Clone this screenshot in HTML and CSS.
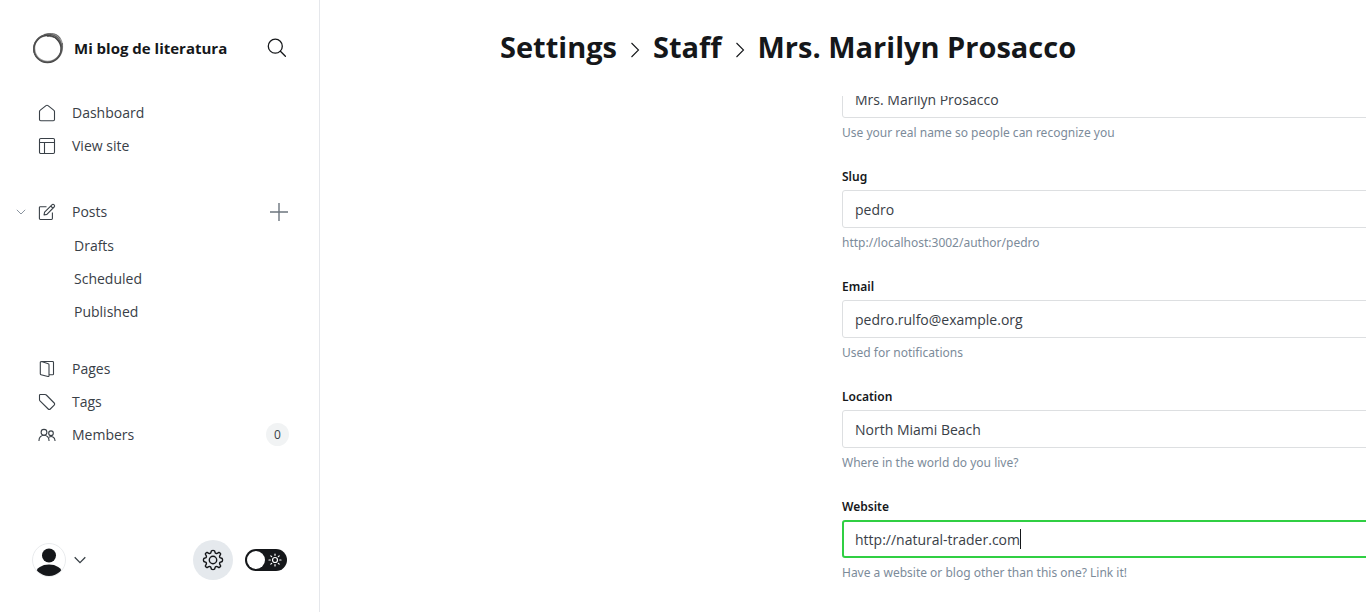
FILE: index.html
```html
<!DOCTYPE html>
<html lang="en">
<head>
<meta charset="utf-8">
<meta name="viewport" content="width=device-width, initial-scale=1">
<title>Settings - Staff - Mrs. Marilyn Prosacco</title>
<link rel="stylesheet" href="styles.css">
</head>
<body>
<div class="app">
  <aside class="sidebar">
    <header class="brand">
      <svg class="brand-logo" viewBox="0 0 32 32" fill="none" aria-hidden="true">
        <path fill-rule="evenodd" d="M8 4.500C14 1 22 0 26.500 3.500C32 8 32.500 18 28.500 24C25 29.500 19 31.500 14 30.500C5 29 .500 22 1.200 15C1.600 11 4 7 8 4.500zM10 5.500C5 8 3 12.500 3.300 17C3.700 24 9 28.700 15.500 28.700C23 28.700 28.500 23 28.600 16C28.700 8 21 1.500 10 5.500z" fill="#999"/>
        <path d="M12 2.500C19 .500 25.500 1.500 28 6.500M15 4.500C22 4 27 7 28.500 12M30.500 11C31 18 28.500 24 25 27" stroke="#666" stroke-width=".9"/>
        <circle cx="15.500" cy="17" r="13.600" stroke="#444" stroke-width="1.400"/>
        <ellipse cx="15.500" cy="16.200" rx="14.300" ry="13.600" transform="rotate(-40 15.500 16)" stroke="#555" stroke-width="1"/>
      </svg>
      <span class="brand-name">Mi blog de literatura</span>
      <button class="icon-button search" type="button" aria-label="Search">
        <svg viewBox="0 0 20 20" width="20" height="20" fill="none" stroke="#15171a" stroke-width="1.3" stroke-linecap="round"><circle cx="8.3" cy="8.2" r="7"/><path d="M13.4 13.3l5 5"/></svg>
      </button>
    </header>
    <nav class="nav" aria-label="Main">
      <ul class="nav-group">
        <li class="nav-row"><a class="nav-link" href="#dashboard"><svg class="nav-icon" viewBox="0 0 18 18"><path d="M1.5 7.6v7.9a1.2 1.2 0 0 0 1.2 1.2h12.6a1.2 1.2 0 0 0 1.2-1.2V7.6a2 2 0 0 0-.8-1.5L10 1.6a1.6 1.6 0 0 0-2 0L2.300 6.100a2 2 0 0 0-.8 1.500z"/></svg>Dashboard</a></li>
        <li class="nav-row"><a class="nav-link" href="#site"><svg class="nav-icon" viewBox="0 0 18 18"><rect x="1.500" y="1.500" width="15" height="15" rx="1.200"/><path d="M1.500 5.500h15M6.500 5.500v11"/></svg>View site</a></li>
      </ul>
      <ul class="nav-group posts">
        <li>
          <div class="nav-row">
            <button class="icon-button expand" type="button" aria-label="Collapse posts" aria-expanded="true"><svg viewBox="0 0 10 10" width="10" height="10" fill="none" stroke="#8a949f" stroke-width="1"><path d="M.8 2.800L5 7l4.200-4.200"/></svg></button>
            <a class="nav-link" href="#posts"><svg class="nav-icon" viewBox="0 0 18 18"><path d="M8.500 3.700H2.300a.9.900 0 0 0-.9.900v11a.9.900 0 0 0 .9.900h11.200a.9.900 0 0 0 .9-.900V9.500M6 12l.6-2.900 7.300-7.300a1.500 1.500 0 0 1 2.200 2.200L8.900 11.400zM12.700 3l2.200 2.200"/></svg>Posts</a>
            <button class="icon-button add" type="button" aria-label="New post"><svg viewBox="0 0 20 20" width="20" height="20" fill="none" stroke="#6c757e" stroke-width="1.400"><path d="M10 1v18M1 10h18"/></svg></button>
          </div>
          <ul class="subnav">
            <li class="nav-row"><a class="nav-link" href="#drafts">Drafts</a></li>
            <li class="nav-row"><a class="nav-link" href="#scheduled">Scheduled</a></li>
            <li class="nav-row"><a class="nav-link" href="#published">Published</a></li>
          </ul>
        </li>
      </ul>
      <ul class="nav-group">
        <li class="nav-row"><a class="nav-link" href="#pages"><svg class="nav-icon" viewBox="0 0 18 18"><path d="M2.300 2.400v11.400c0 .5.300.800.700.900l7 1.800c.6.100 1-.200 1-.8V4.700c0-.5-.3-.8-.7-.9L3.500 1.600c-.7-.1-1.200.2-1.200.8zM3.200 1.500h11.400c.6 0 .9.300.9.900v11.500c0 .6-.3.900-.9.900H11"/></svg>Pages</a></li>
        <li class="nav-row"><a class="nav-link" href="#tags"><svg class="nav-icon" viewBox="0 0 18 18"><path d="M1.500 2.300v4.400c0 .5.200.900.5 1.200l8.200 8.100c.6.600 1.500.600 2.100 0l3.900-3.900c.6-.6.600-1.500 0-2.100L8.300 2a1.800 1.800 0 0 0-1.200-.5H2.300a.8.800 0 0 0-.8.800z"/></svg>Tags</a></li>
        <li class="nav-row"><a class="nav-link" href="#members"><svg class="nav-icon" viewBox="0 0 18 18"><circle cx="6" cy="6.300" r="2.900"/><circle cx="13" cy="7.200" r="2.300"/><path d="M1 15v-.8a5 5 0 0 1 10 0v.8M11 11.200a3.900 3.900 0 0 1 6 3.200v.6"/></svg>Members</a><span class="count">0</span></li>
      </ul>
    </nav>
    <footer class="sidebar-footer">
      <button class="icon-button account" type="button" aria-label="Account menu">
        <svg viewBox="0 0 34 34" width="34" height="34"><defs><clipPath id="avatar"><circle cx="17" cy="17" r="16"/></clipPath></defs><circle cx="17" cy="17" r="16.500" fill="#fff" stroke="#e9ebed"/><g clip-path="url(#avatar)" fill="#15171a"><circle cx="17" cy="12.500" r="7"/><ellipse cx="17" cy="30" rx="13" ry="8.500"/></g></svg>
        <svg viewBox="0 0 12 12" width="12" height="12" fill="none" stroke="#394047" stroke-width="1.300"><path d="M.7 3.300L6 8.600l5.300-5.300"/></svg>
      </button>
      <a class="settings" href="#settings" aria-label="Settings"><svg viewBox="-11 -11 22 22" width="22" height="22" fill="none" stroke="#15171a" stroke-width="1.400" stroke-linejoin="round"><circle r="3.700"/><path d="M-1.500-9.200Q0-10 1.500-9.200L2.300-7Q3.100-6.200 4.200-6.700L6-7.700Q7.200-7.200 7.700-6L6.700-4.200Q6.200-3.100 7-2.300L9.200-1.500Q10 0 9.200 1.500L7 2.300Q6.200 3.100 6.700 4.200L7.700 6Q7.200 7.200 6 7.700L4.200 6.700Q3.100 6.200 2.300 7L1.500 9.200Q0 10-1.500 9.200L-2.300 7Q-3.100 6.200-4.200 6.700L-6 7.700Q-7.200 7.200-7.700 6L-6.700 4.200Q-6.200 3.100-7 2.300L-9.200 1.500Q-10 0-9.200-1.500L-7-2.300Q-6.200-3.100-6.700-4.200L-7.700-6Q-7.200-7.200-6-7.700L-4.200-6.700Q-3.100-6.200-2.300-7Z"/></svg></a>
      <label class="theme"><input class="theme-input" type="checkbox" aria-label="Dark mode"><span class="theme-knob"></span><svg viewBox="0 0 14 14" width="14" height="14" fill="none" stroke="#fff" stroke-width="1.200" stroke-linecap="round"><circle cx="7" cy="7" r="2.500"/><path d="M7 1v1.300M7 11.700V13M1 7h1.300M11.700 7H13M2.800 2.800l.9.900M10.300 10.300l.9.900M2.800 11.200l.9-.9M10.300 3.700l.9-.9"/></svg></label>
    </footer>
  </aside>
  <main class="main">
    <h1 class="title">
      <a href="#settings">Settings</a>
      <svg class="crumb" viewBox="0 0 10 16"><path d="M1.500 1l7 7-7 7"/></svg>
      <a href="#staff">Staff</a>
      <svg class="crumb" viewBox="0 0 10 16"><path d="M1.500 1l7 7-7 7"/></svg>
      <span>Mrs. Marilyn Prosacco</span>
    </h1>
    <div class="viewport">
      <form class="form">
        <div class="field"><input class="text-input" id="name" type="text" aria-label="Full name" value="Mrs. Marilyn Prosacco"><p class="hint">Use your real name so people can recognize you</p></div>
        <div class="field"><label class="label" for="slug">Slug</label><input class="text-input" id="slug" type="text" value="pedro"><p class="hint">http://localhost:3002/author/pedro</p></div>
        <div class="field"><label class="label" for="email">Email</label><input class="text-input" id="email" type="email" value="pedro.rulfo@example.org"><p class="hint">Used for notifications</p></div>
        <div class="field"><label class="label" for="location">Location</label><input class="text-input" id="location" type="text" value="North Miami Beach"><p class="hint">Where in the world do you live?</p></div>
        <div class="field"><label class="label" for="website">Website</label><div class="text-input active"><input class="inner-input" id="website" type="url" value="http://natural-trader.com"><span class="caret"></span></div><p class="hint">Have a website or blog other than this one? Link it!</p></div>
      </form>
    </div>
  </main>
</div>
</body>
</html>
```
FILE: styles.css
```css
* { box-sizing: border-box; }
body {
  margin: 0;
  overflow: hidden;
  background: #fff;
  color: #15171a;
  font-family: "Segoe UI", "Open Sans", "Noto Sans", sans-serif;
  font-size: 14px;
}
a { color: inherit; text-decoration: none; }
ul { margin: 0; padding: 0; list-style: none; }
svg { display: block; flex: none; }
.app { display: flex; height: 100vh; }

.sidebar {
  display: flex;
  flex: none;
  flex-direction: column;
  width: 320px;
  border-right: 1px solid #e5e7eb;
}
.brand { display: flex; align-items: center; height: 96px; padding: 0 32px; }
.brand-logo { width: 32px; height: 32px; margin-right: 10px; }
.brand-name { font-size: 15px; font-weight: 700; line-height: 20px; }
.icon-button {
  display: flex;
  align-items: center;
  padding: 0;
  border: 0;
  background: none;
  cursor: pointer;
}
.search { margin-left: auto; }

.nav { display: flex; flex: 1; flex-direction: column; gap: 24px; padding: 0 30px 0 16px; color: #394047; }
.posts { margin-top: 9px; }
.nav-row { display: flex; align-items: center; height: 33px; padding-left: 22px; }
.nav-link { display: flex; flex: 1; align-items: center; gap: 16px; }
.nav-icon { width: 18px; height: 18px; fill: none; stroke: #394047; stroke-width: 1.1; stroke-linejoin: round; }
.expand { width: 10px; margin: 0 12px 0 -22px; }
.subnav { margin-top: 1px; }
.subnav .nav-row { padding-left: 58px; }
.count {
  width: 23px;
  height: 23px;
  border-radius: 12px;
  background: #f1f3f4;
  font-size: 12px;
  line-height: 23px;
  text-align: center;
}

.sidebar-footer { display: flex; align-items: center; height: 104px; padding: 0 32px; }
.account { gap: 8px; margin-right: auto; }
.settings {
  display: grid;
  place-items: center;
  width: 40px;
  height: 40px;
  margin-right: 12px;
  border-radius: 50%;
  background: #e5e9ed;
}
.theme {
  position: relative;
  display: flex;
  align-items: center;
  justify-content: space-between;
  width: 42px;
  height: 22px;
  padding: 0 5px 0 2px;
  border-radius: 11px;
  background: #15171a;
}
.theme-input { position: absolute; inset: 0; width: 100%; height: 100%; margin: 0; opacity: 0; }
.theme-knob { width: 18px; height: 18px; border-radius: 50%; background: #fff; }

.main { display: flex; flex: 1; flex-direction: column; min-width: 0; padding-left: 180px; }
.title {
  display: flex;
  flex: none;
  align-items: center;
  gap: 13px;
  height: 96px;
  margin: 0;
  padding-bottom: 4px;
  font-size: 29px;
  font-weight: 700;
  white-space: nowrap;
}
.crumb { width: 10px; height: 16px; margin-top: 8px; fill: none; stroke: #15171a; stroke-width: 1.1; }
.viewport { flex: 1; min-height: 0; padding-left: 342px; overflow: hidden; }
.form { display: flex; flex-direction: column; gap: 26px; min-width: 640px; margin-top: -16px; }
.field { display: flex; flex-direction: column; }
.label { margin-bottom: 4px; font-family: "Segoe UI", "Noto Sans", sans-serif; font-size: 12px; font-weight: 600; line-height: 18px; }
.text-input {
  width: 100%;
  height: 38px;
  padding: 0 12px;
  border: 1px solid #dddfe1;
  border-radius: 3px;
  outline: none;
  background: #fff;
  color: #394047;
  font: inherit;
}
.text-input.active { display: flex; align-items: center; padding: 0 11px; border: 2px solid #30cf43; }
.inner-input {
  field-sizing: content;
  padding: 0;
  border: 0;
  outline: none;
  background: none;
  color: inherit;
  font: inherit;
}
.caret { width: 1px; height: 20px; background: #15171a; }
.hint { margin: 6px 0 0; color: #7c8b9a; font-family: "Segoe UI", "Noto Sans", sans-serif; font-size: 12px; line-height: 18px; }
```
